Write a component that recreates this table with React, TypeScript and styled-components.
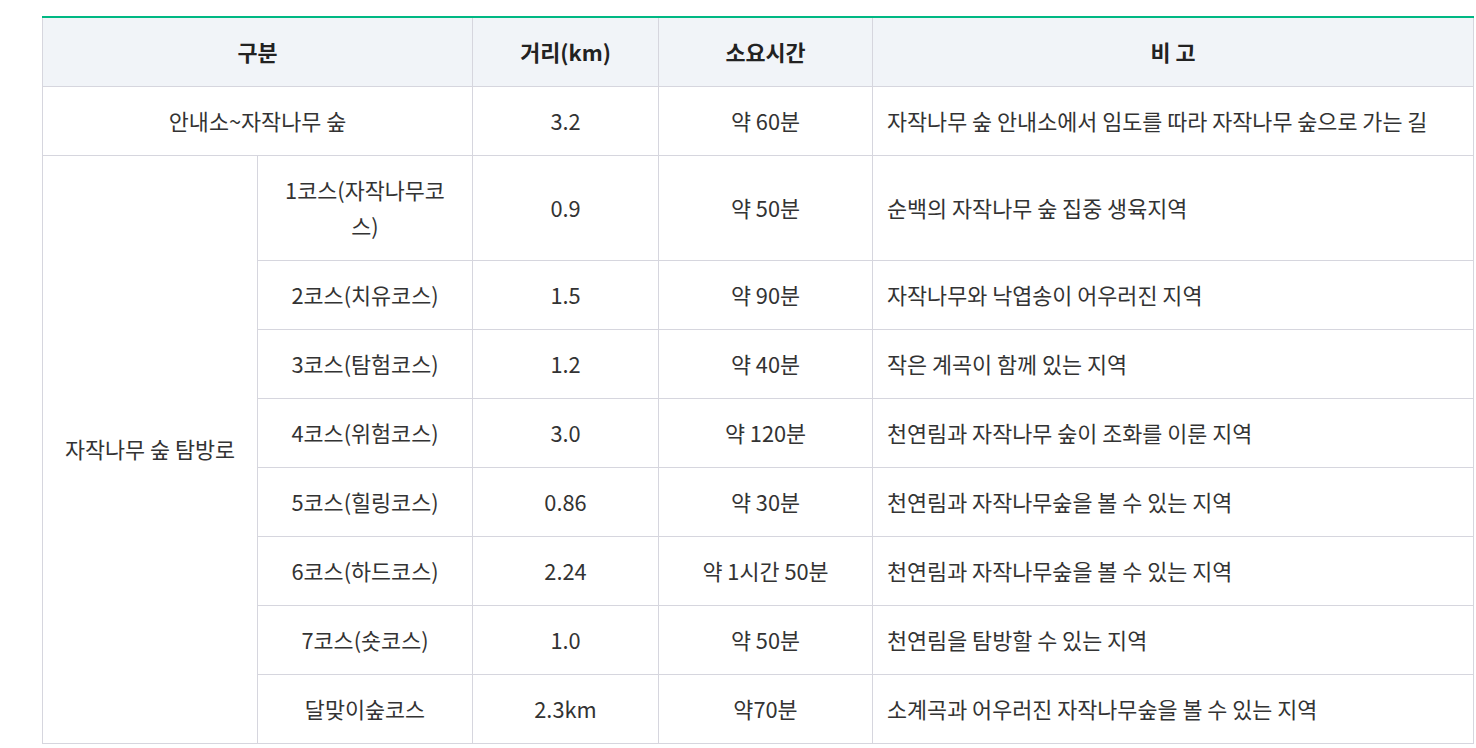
import styled, { createGlobalStyle } from 'styled-components';

const GlobalStyle = createGlobalStyle`
  html, body {
    margin: 0;
    padding: 0;
    background: #ffffff;
  }
  body {
    font-family: 'Noto Sans CJK KR', 'Noto Sans', sans-serif;
    color: #333333;
  }
`;

const Page = styled.div`
  padding: 16px 0 0 42px;
  width: 1476px;
  box-sizing: border-box;
`;

const Table = styled.table`
  width: 1432px;
  table-layout: fixed;
  border-collapse: collapse;
  border-top: 2px solid #00b883;
  font-size: 21.8px;
  line-height: 36px;
  letter-spacing: 0;
`;

const HeadCell = styled.th`
  background: #f1f4f8;
  font-weight: 700;
  color: #222222;
  height: 69px;
  padding: 0 16px;
  border: 1px solid #d6d6de;
  border-top: none;
  text-align: center;
  box-sizing: border-box;
`;

const Cell = styled.td<{ $align?: 'left' | 'center' }>`
  padding: ${({ $align }) => ($align === 'left' ? '16px 16px 16px 14px' : '16px')};
  border: 1px solid #d6d6de;
  text-align: ${({ $align }) => $align || 'center'};
  vertical-align: middle;
  color: #333333;
  word-break: keep-all;
`;

type Course = {
  name: string;
  distance: string;
  time: string;
  note: string;
};

const courses: Course[] = [
  { name: '1코스(자작나무코스)', distance: '0.9', time: '약 50분', note: '순백의 자작나무 숲 집중 생육지역' },
  { name: '2코스(치유코스)', distance: '1.5', time: '약 90분', note: '자작나무와 낙엽송이 어우러진 지역' },
  { name: '3코스(탐험코스)', distance: '1.2', time: '약 40분', note: '작은 계곡이 함께 있는 지역' },
  { name: '4코스(위험코스)', distance: '3.0', time: '약 120분', note: '천연림과 자작나무 숲이 조화를 이룬 지역' },
  { name: '5코스(힐링코스)', distance: '0.86', time: '약 30분', note: '천연림과 자작나무숲을 볼 수 있는 지역' },
  { name: '6코스(하드코스)', distance: '2.24', time: '약 1시간 50분', note: '천연림과 자작나무숲을 볼 수 있는 지역' },
  { name: '7코스(숏코스)', distance: '1.0', time: '약 50분', note: '천연림을 탐방할 수 있는 지역' },
  { name: '달맞이숲코스', distance: '2.3km', time: '약70분', note: '소계곡과 어우러진 자작나무숲을 볼 수 있는 지역' },
];

const NameCell = styled(Cell)`
  padding: 16px 22px;
  word-break: break-all;
`;

export default function App() {
  return (
    <Page>
      <GlobalStyle />
      <Table>
        <colgroup>
          <col style={{ width: 215 }} />
          <col style={{ width: 215 }} />
          <col style={{ width: 186 }} />
          <col style={{ width: 214 }} />
          <col />
        </colgroup>
        <thead>
          <tr>
            <HeadCell colSpan={2}>구분</HeadCell>
            <HeadCell>거리(km)</HeadCell>
            <HeadCell>소요시간</HeadCell>
            <HeadCell>비 고</HeadCell>
          </tr>
        </thead>
        <tbody>
          <tr>
            <Cell colSpan={2}>안내소~자작나무 숲</Cell>
            <Cell>3.2</Cell>
            <Cell>약 60분</Cell>
            <Cell $align="left">자작나무 숲 안내소에서 임도를 따라 자작나무 숲으로 가는 길</Cell>
          </tr>
          {courses.map((course, index) => (
            <tr key={course.name}>
              {index === 0 && <Cell rowSpan={courses.length}>자작나무 숲 탐방로</Cell>}
              <NameCell>{course.name}</NameCell>
              <Cell>{course.distance}</Cell>
              <Cell>{course.time}</Cell>
              <Cell $align="left">{course.note}</Cell>
            </tr>
          ))}
        </tbody>
      </Table>
    </Page>
  );
}
